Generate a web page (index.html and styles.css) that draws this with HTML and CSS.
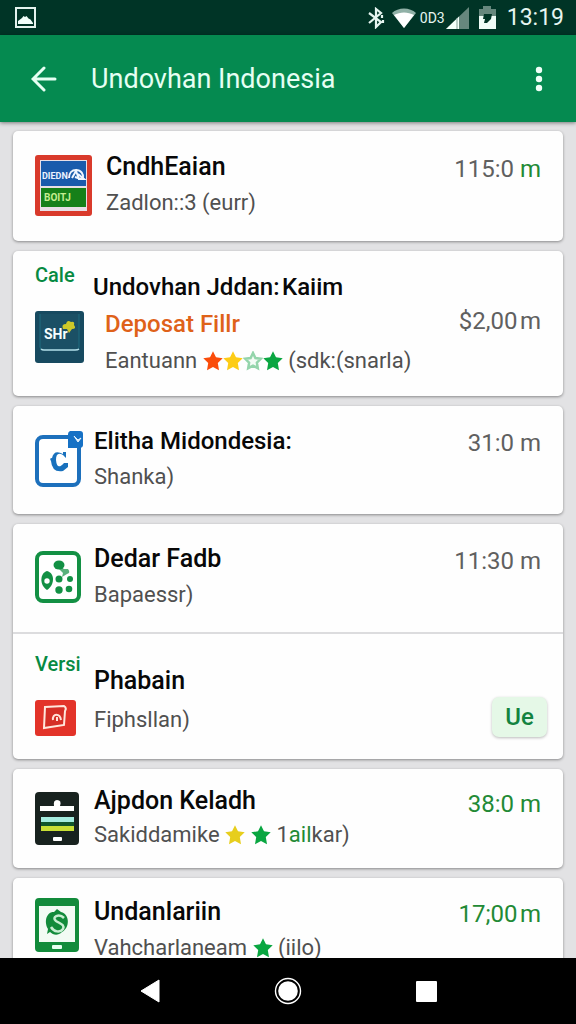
FILE: index.html
```html
<!DOCTYPE html>
<html lang="id">
<head>
<meta charset="utf-8">
<meta name="viewport" content="width=device-width, initial-scale=1">
<title>Undovhan Indonesia</title>
<link rel="stylesheet" href="styles.css">
</head>
<body>
<svg class="defs" aria-hidden="true">
  <symbol id="star" viewBox="0 0 20 20"><path d="M10 .3l3 6 6.700 1-4.900 4.700 1.200 7.200L10 16l-6 3.200L5.200 12 .3 7.300l6.700-1z"/></symbol>
</svg>
<div class="screen">
  <div class="status">
    <svg class="status-photo" width="21" height="21" viewBox="0 0 21 21"><rect x="1" y="1" width="19" height="19" fill="none" stroke="#e4f3ee" stroke-width="2"/><path d="M3 17v-3l4-3 1.500-2 1.500 1 1.500-1 2 2.500 2 1 2.500 3.500v1z" fill="#f2fffb"/></svg>
    <svg class="status-bt" width="18" height="22" viewBox="0 0 18 22" fill="none" stroke="#e6f5f0" stroke-width="2.200"><path d="M2 6l12 9-5 5V2l5 4L2 16M15 8v3M16 13v3"/></svg>
    <svg class="status-wifi" width="24" height="20" viewBox="0 0 24 20"><path d="M0 5C6-1 18-1 24 5L12 20z" fill="#91b1a7"/><path d="M2 7c6-3.500 14-3.500 20 0L12 20z" fill="#fff"/></svg>
    <span class="status-net">0D3</span>
    <svg width="23" height="22" viewBox="0 0 23 22"><path d="M23 0v22H0z" fill="#66877d"/><path d="M13 9.600V22H0z" fill="#f4fffb"/><path d="M11 11v11" stroke="#84a198"/></svg>
    <svg class="status-battery" width="17" height="23" viewBox="0 0 17 23"><path d="M4 0h8v3h5v8H0V3h4z" fill="#66877d"/><path d="M0 10h17v13H0z" fill="#effcf7"/><path d="M5 8h8l-1 5-4 4H5l1-4H4z" fill="#003426"/></svg>
    <span class="status-time">13:19</span>
  </div>
  <header class="appbar">
    <button class="icon-btn" aria-label="Kembali"><svg width="26" height="26" viewBox="0 0 26 26" fill="none" stroke="#e6fff3" stroke-width="3" stroke-linecap="round"><path d="M24 13H3M13 2L2 13l11 11"/></svg></button>
    <h1 class="title">Undovhan Indonesia</h1>
    <button class="icon-btn" aria-label="Menu"><svg width="8" height="26" viewBox="0 0 8 26" fill="#f0fff8"><circle cx="4" cy="4" r="3.200"/><circle cx="4" cy="13" r="3.200"/><circle cx="4" cy="22" r="3.200"/></svg></button>
  </header>
  <main class="list">
    <article class="card">
      <div class="row row-first">
        <div class="media"><svg width="57" height="61" viewBox="0 0 57 61"><rect width="57" height="61" rx="3" fill="#d93a2b"/><rect x="5" y="5" width="47" height="51" fill="#e9dfe6"/><rect x="6" y="6" width="45" height="25" fill="#1a5bac"/><rect x="6" y="33" width="45" height="19" fill="#168019"/><text x="7" y="24" class="logo-text logo-blue">DIEDN</text><path d="M34 23c0-5 3-8 7-8 5 0 8 4 7 9M37 23l4-7 3 8M43 19l6 5h-6M40 22l6 2" fill="none" stroke="#f0f5ff" stroke-width="2"/><text x="9" y="46" class="logo-text logo-green">BOITJ</text></svg></div>
        <div class="body"><h2 class="name">CndhEaian</h2><p class="sub">Zadlon::3 (eurr)</p></div>
        <div class="amount">115:0 <span class="green">m</span></div>
      </div>
    </article>
    <article class="card">
      <div class="row row-offer">
        <div class="media"><span class="tag">Cale</span><svg width="49" height="52" viewBox="0 0 49 52"><rect width="49" height="52" rx="3" fill="#174a60"/><path d="M5 3v33q0 3 3 3h33q3 0 3-3V3" fill="#1b5065" stroke="#1f6d80"/><path d="M6 38q1 1 3 1h31q3 0 4-1" fill="none" stroke="#b2dce5" stroke-width="1.500"/><text x="9" y="28" class="logo-text logo-shr">SHr</text><path d="M28 18q-2-5 3-5 1-5 5-2 4-1 3 3 3 4-2 4l-3 4-2-4z" fill="#cdc829"/></svg></div>
        <div class="body"><h2 class="name">Undovhan Jddan:&#8202;Kaiim</h2><p class="offer">Deposat Fillr</p><p class="sub indent">Eantuann <span class="stars"><svg class="star red"><use href="#star"/></svg><svg class="star yellow"><use href="#star"/></svg><svg class="star" viewBox="0 0 20 20"><path d="M10 2l2.400 5 5.400.8-3.900 3.900.9 5.500L10 14.600l-4.800 2.600.9-5.500L2.200 7.800 7.600 7z" fill="#f4fcf6" stroke="#94d5ab" stroke-width="2.500"/></svg><svg class="star emerald"><use href="#star"/></svg></span> (sdk:(snarla)</p></div>
        <div class="amount middle">$2,00&#8202;m</div>
      </div>
    </article>
    <article class="card">
      <div class="row row-badged">
        <div class="media"><svg width="48" height="56" viewBox="0 0 48 56"><rect x="2" y="6" width="42" height="48" rx="6" fill="#fff" stroke="#1d70bc" stroke-width="4"/><path d="M35 0h10q3 0 3 3v11q0 3-4 3H33V3q0-2 2-3z" fill="#1671c5"/><path d="M39 5l4 4 3-2-3 4z" fill="#e6f4ff" stroke="#e6f4ff"/><path d="M31 27V21h-3v2q-9-5-11 4-3 0-1 3 1 12 12 10l5-4v-4h-4q-7 8-8-3 0-9 7-5z" fill="#1971bd"/></svg></div>
        <div class="body"><h2 class="name">Elitha Midondesia:</h2><p class="sub">Shanka)</p></div>
        <div class="amount">31:0 m</div>
      </div>
    </article>
    <article class="card">
      <div class="row">
        <div class="media"><svg width="46" height="52" viewBox="0 0 46 52"><rect x="2" y="2" width="42" height="48" rx="6" fill="#fff" stroke="#139044" stroke-width="4"/><g fill="#129044"><ellipse cx="24" cy="14" rx="5.500" ry="4.500"/><path d="M12 20c8 2 8 14 0 19-8-5-7-17 0-19z"/><path d="M25 15l4 3 4 0q3 4-1 5l-5 3 1-4-4-4z" opacity=".7"/><circle cx="24" cy="28" r="3.500"/><circle cx="35" cy="28" r="3"/><circle cx="24" cy="39" r="3.700"/><circle cx="34" cy="38" r="3.300"/></g><circle cx="12" cy="30" r="2.700" fill="#fff"/></svg></div>
        <div class="body"><h2 class="name">Dedar Fadb</h2><p class="sub">Bapaessr)</p></div>
        <div class="amount">11:30 m</div>
      </div>
      <div class="row row-version">
        <div class="media"><span class="tag">Versi</span><svg width="41" height="36" viewBox="0 0 41 36"><rect width="41" height="36" rx="3" fill="#e33329"/><path d="M10 7l19-1q3 2 1 5l-1 14-20 3z" fill="#d52e26" stroke="#ffe7dd" stroke-width="2"/><path d="M18 20c-1-7 7-7 8 0M22 17v4" fill="none" stroke="#ffe1d8" stroke-width="2"/></svg></div>
        <div class="body"><h2 class="name">Phabain</h2><p class="sub">Fiphsllan)</p></div>
        <button class="chip">Ue</button>
      </div>
    </article>
    <article class="card">
      <div class="row row-compact">
        <div class="media"><svg width="44" height="53" viewBox="0 0 44 53"><rect width="44" height="53" rx="4" fill="#18221f"/><path d="M5 14h14q-1-6 3-6 5 0 3 6h14v5H5z" fill="#fff"/><path d="M6 25h33v5H6z" fill="#a4ecdf"/><path d="M6 30h33v4H6z" fill="#10562b"/><path d="M6 34h33v5H6z" fill="#c8df35"/><rect x="18" y="45" width="9" height="4" rx="1" fill="#fff"/></svg></div>
        <div class="body"><h2 class="name">Ajpdon Keladh</h2><p class="sub">Sakiddamike <span class="stars spaced"><svg class="star gold"><use href="#star"/></svg><svg class="star emerald"><use href="#star"/></svg></span> 1<span class="green">ail</span>kar)</p></div>
        <div class="amount green">38:0 m</div>
      </div>
    </article>
    <article class="card">
      <div class="row row-last">
        <div class="media"><svg width="44" height="54" viewBox="0 0 44 54"><rect width="44" height="54" rx="4" fill="#128b3b"/><rect x="4" y="8" width="36" height="36" fill="#f2fbf4"/><path d="M22 11l4 3c9 2 9 16 1 20-4 4-9 3-12 0l-3 2 1-5C8 22 13 13 19 14z" fill="#128b3b"/><path d="M29 20c-5-5-13-1-8 3 5 3 9 4 7 8-3 4-9 3-12-2" fill="none" stroke="#c8eed2" stroke-width="2.500"/><rect x="17" y="47" width="10" height="4" rx="1" fill="#e7fff0"/></svg></div>
        <div class="body"><h2 class="name">Undanlariin</h2><p class="sub">Vahcharlaneam <svg class="star emerald"><use href="#star"/></svg> (iilo)</p></div>
        <div class="amount green">17;00&#8202;m</div>
      </div>
    </article>
  </main>
  <nav class="navbar">
    <button aria-label="Kembali ke sebelumnya"><svg width="20" height="24" viewBox="0 0 20 24"><path d="M19 1v22L1 12z" fill="#fff" stroke="#fff" stroke-linejoin="round"/></svg></button>
    <button aria-label="Beranda"><svg width="28" height="28" viewBox="0 0 28 28"><circle cx="14" cy="14" r="12.500" fill="none" stroke="#fff" stroke-width="1.400"/><circle cx="14" cy="14" r="9.800" fill="#fff"/></svg></button>
    <button aria-label="Aplikasi terbaru"><svg width="21" height="21" viewBox="0 0 21 21"><rect width="21" height="21" rx="1" fill="#fff"/></svg></button>
  </nav>
</div>
</body>
</html>
```
FILE: styles.css
```css
* { box-sizing: border-box; }
body { margin: 0; font-family: Roboto, "Liberation Sans", sans-serif; color: #111; background: #e2e2e4; }
h1, h2, p { margin: 0; font-weight: 400; }
button { border: 0; padding: 0; background: none; font: inherit; color: inherit; cursor: pointer; }
svg { display: block; flex: none; }
.defs { position: absolute; width: 0; height: 0; }
.screen { display: flex; flex-direction: column; height: 100vh; }

.status { display: flex; align-items: center; flex: none; height: 35px; padding: 0 12px 0 15px; background: #003426; color: #e6f5f0; }
.status-photo { margin-right: auto; }
.status-wifi { margin-left: 7px; }
.status-net { margin: 0 1px 0 4px; font-size: 14px; line-height: 20px; }
.status-battery { margin: 0 11px 0 10px; }
.status-time { font-size: 23px; line-height: 32px; }

.appbar { position: relative; display: flex; align-items: center; flex: none; height: 87px; padding: 0 33px 0 31px; background: #058a50; color: #e6fff3; box-shadow: 0 1px 4px #0007; }
.icon-btn { display: flex; align-items: center; flex: none; min-height: 48px; }
.title { flex: 1; margin-left: 34px; font-size: 27px; line-height: 36px; }

.list { display: flex; flex-direction: column; gap: 10px; flex: 1; min-height: 0; overflow: hidden; padding: 9px 13px 0; }
.card { flex: none; border-radius: 5px; background: #fefefe; box-shadow: 0 1px 3px #0006; }
.row { display: flex; gap: 13px; padding: 17px 22px 19px; }
.row-first { gap: 14px; padding: 18px 22px 20px; }
.row-offer { gap: 9px; padding: 12px 22px 17px; }
.row-badged { gap: 11px; }
.row-version { border-top: 2px solid #dcdcde; padding: 18px 16px 18px 22px; }
.row-compact { padding: 15px 22px 16px; }
.row-last { padding-top: 16px; }
.media { display: flex; flex-direction: column; justify-content: center; flex: none; min-width: 46px; }
.row-offer .media, .row-version .media { justify-content: flex-start; gap: 24px; }
.row-last .media { justify-content: flex-start; padding-top: 4px; }
.body { flex: 1; min-width: 0; white-space: nowrap; }
.row-offer .body { padding-top: 6px; }
.row-version .body { padding-top: 11px; }
.tag { color: #078a42; font-size: 20px; font-weight: 500; line-height: 24px; }
.name { color: #080808; font-size: 25px; font-weight: 500; line-height: 36px; }
.row-offer .name, .row-badged .name { font-size: 24px; }
.sub { display: flex; align-items: center; white-space: pre; color: #505050; font-size: 22px; line-height: 36px; }
.row-compact .name, .row-compact .sub { line-height: 34px; }
.row-version .sub { line-height: 42px; }
.offer { padding-left: 12px; color: #df6219; font-size: 24px; font-weight: 500; line-height: 38px; }
.indent { padding-left: 12px; }
.stars { display: flex; }
.spaced { gap: 6px; }
.star { width: 20px; height: 20px; }
.red { fill: #fa4c0a; }
.yellow { fill: #fdcc16; }
.gold { fill: #e7ce1d; }
.emerald { fill: #0aa641; }
.amount { flex: none; color: #606060; font-size: 24px; line-height: 40px; white-space: nowrap; }
.middle { align-self: center; }
.green { color: #228a35; }
.chip { align-self: flex-end; flex: none; min-width: 55px; height: 40px; margin-bottom: 4px; border-radius: 7px; background: #e5f8e7; color: #138340; font-size: 24px; font-weight: 500; box-shadow: 0 1px 3px #0004; }
.logo-text { font-weight: 700; }
.logo-blue { fill: #eaf2ff; font-size: 9px; }
.logo-green { fill: #c5ed91; font-size: 10px; }
.logo-shr { fill: #f7ffff; font-size: 14px; }

.navbar { display: grid; grid-template-columns: repeat(3, 1fr); flex: none; height: 66px; padding: 0 14%; background: #000; }
.navbar button { display: flex; align-items: center; justify-content: center; }
```
